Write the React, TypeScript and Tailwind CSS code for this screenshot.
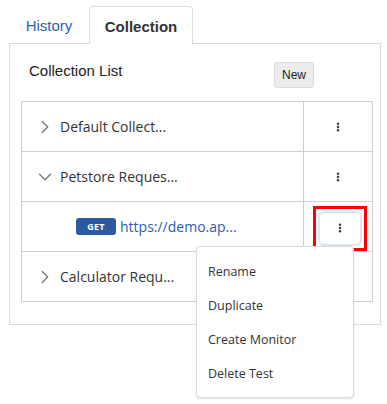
import { ChevronRight, ChevronDown } from 'lucide-react';

const sans = "font-['Liberation_Sans',Arial,sans-serif]";
const open = "font-['Open_Sans',sans-serif]";

function Kebab() {
  return (
    <svg width="4" height="10" viewBox="0 0 4 10" className="text-[#3a3a3a]">
      <circle cx="2" cy="1.7" r="1.2" fill="currentColor" />
      <circle cx="2" cy="5" r="1.2" fill="currentColor" />
      <circle cx="2" cy="8.3" r="1.2" fill="currentColor" />
    </svg>
  );
}

function Row({ label, open: isOpen }: { label: string; open?: boolean }) {
  return (
    <div className="flex h-[50px] border-b border-[#cfcfcf]">
      <div className="flex-1 flex items-center pl-[12px] gap-[4px] text-[14px] text-[#333]">
        {isOpen ? (
          <ChevronDown size={22} strokeWidth={1.4} className="text-[#777]" />
        ) : (
          <ChevronRight size={22} strokeWidth={1.4} className="text-[#777]" />
        )}
        <span>{label}</span>
      </div>
      <div className="w-[69px] border-l border-[#cfcfcf] flex items-center justify-center">
        <Kebab />
      </div>
    </div>
  );
}

export default function App() {
  return (
    <div className={`w-[387px] h-[404px] bg-white relative ${sans}`}>
      {/* Tabs */}
      <div className="flex pl-[9px] pt-[6px] pr-[6px]">
        <div className="w-[80px] h-[38px] pt-[3px] flex items-center justify-center text-[15px] text-[#2a62b0] border-b border-[#dcdcdc]">
          History
        </div>
        <div className="w-[104px] h-[38px] pt-[3px] flex items-center justify-center text-[15px] font-bold text-[#333] border border-b-0 border-[#dcdcdc] rounded-t-[4px]">
          Collection
        </div>
        <div className="flex-1 border-b border-[#dcdcdc]" />
      </div>

      {/* Panel */}
      <div className="ml-[9px] mr-[6px] border border-t-0 border-[#dcdcdc] h-[281px] px-[11px]">
        <div className="flex items-center justify-between h-[57px] pl-[8px] pr-[55px] pt-[2px]">
          <span className="text-[15px] text-[#222] -mt-[4px]">Collection List</span>
          <button className="h-[26px] w-[40px] mt-[2px] rounded-[3px] bg-[#ececec] border border-[#dadada] text-[12px] text-[#222]">
            New
          </button>
        </div>

        <div className={`border border-b-0 border-[#cfcfcf] w-[352px] ${open}`}>
          <Row label="Default Collect..." />
          <Row label="Petstore Reques..." open />
          <div className="flex h-[50px] border-b border-[#cfcfcf]">
            <div className="flex-1 flex items-center pl-[54px] gap-[4px]">
              <span className="w-[40px] h-[17px] rounded-[3px] bg-[#2c5aa0] text-white text-[9px] font-bold flex items-center justify-center tracking-wide">
                GET
              </span>
              <span className="text-[14px] text-[#2a5db0]">https://demo.ap...</span>
            </div>
            <div className="w-[69px] border-l border-[#cfcfcf] flex items-center justify-center">
              <div className="w-[54px] h-[45px] border-[3px] border-[#ff0000] flex items-center justify-center mt-[3px] ml-[4px]">
                <div className="w-[44px] h-[35px] rounded-[6px] border-2 border-[#dde6ec] bg-white flex items-center justify-center">
                  <Kebab />
                </div>
              </div>
            </div>
          </div>
          <Row label="Calculator Requ..." />
        </div>
      </div>

      {/* Dropdown menu */}
      <div
        className={`absolute left-[196px] top-[246px] w-[158px] h-[152px] bg-white border border-[#dcdcdc] rounded-[4px] shadow-sm py-[8px] ${open}`}
      >
        {['Rename', 'Duplicate', 'Create Monitor', 'Delete Test'].map((item) => (
          <div key={item} className="h-[34px] flex items-center pl-[11px] text-[12.5px] text-[#333]">
            {item}
          </div>
        ))}
      </div>
    </div>
  );
}
